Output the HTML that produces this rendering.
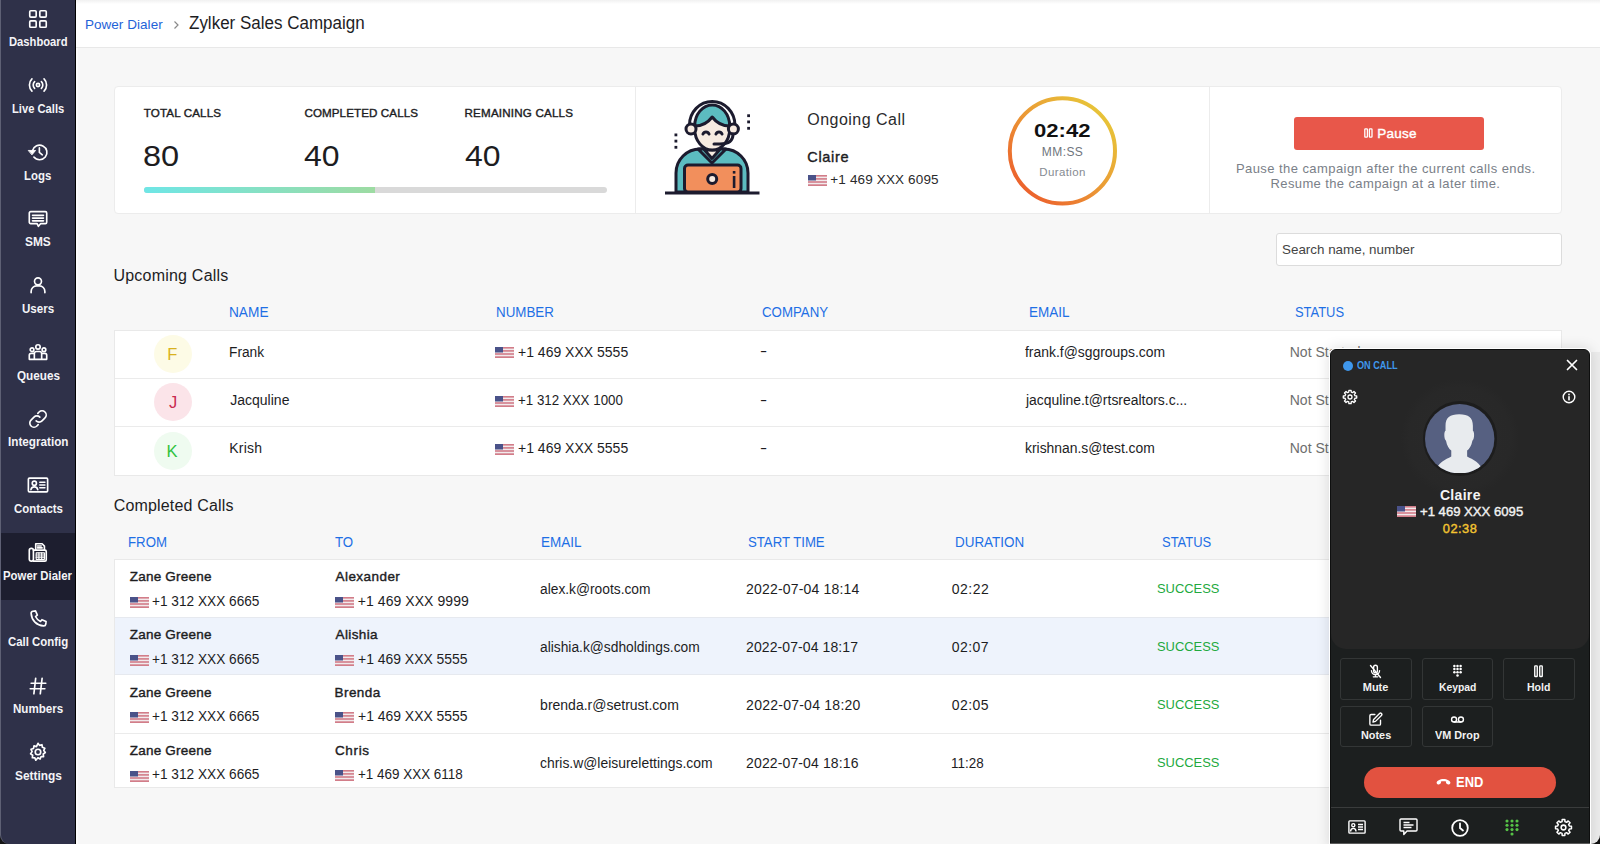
<!DOCTYPE html>
<html><head><meta charset="utf-8">
<style>
*{box-sizing:border-box;margin:0;padding:0}
html,body{width:1600px;height:844px;overflow:hidden;font-family:"Liberation Sans",sans-serif;background:#f7f7f7;color:#1d1d1f;position:relative}
.abs{position:absolute}
.t{position:absolute;white-space:nowrap;line-height:1}
#side{position:absolute;left:0;top:0;width:76px;height:844px;background:#2f3149;border-right:1px solid #000;border-left:1px solid #5e6074;border-bottom-left-radius:9px;overflow:hidden}
.si{position:absolute;left:0;width:75px;height:66.67px}
#side .abs,#side .t,#side .si{margin-left:-1px}
.si.act{background:#1d1e2f}
#hdr{position:absolute;left:76px;top:0;width:1524px;height:48px;background:#fff;border-bottom:1px solid #e8e8e8}
.card{position:absolute;background:#fff;border:1px solid #ececec;border-radius:4px}
.card2{position:absolute;background:#fff;border:1px solid #e9e9e9}
</style></head><body>
<div class="abs" style="left:0;top:830px;width:14px;height:14px;background:#151515"></div>
<div id="side">
<div class="si" style="top:0.00px"></div>
<svg class="abs" style="left:27px;top:7.80px" width="22" height="22" viewBox="0 0 24 24" fill="none" stroke="#fff" stroke-width="1.8" stroke-linecap="round" stroke-linejoin="round"><rect x="3" y="3" width="7" height="7" rx="1.2"/><rect x="14" y="3" width="7" height="7" rx="1.2"/><rect x="3" y="14" width="7" height="7" rx="1.2"/><rect x="14" y="14" width="7" height="7" rx="1.2"/></svg>
<div class="t" style="left:8.75px;top:36.34px;font-size:12px;color:#f4f4f7;font-weight:bold;transform:scaleX(0.9331);transform-origin:0 0;">Dashboard</div>
<div class="si" style="top:66.67px"></div>
<svg class="abs" style="left:27px;top:74.47px" width="22" height="22" viewBox="0 0 24 24" fill="none" stroke="#fff" stroke-width="1.8" stroke-linecap="round" stroke-linejoin="round"><circle cx="12" cy="12" r="1.8"/><path d="M8.3 8.3a5.2 5.2 0 0 0 0 7.4M15.7 8.3a5.2 5.2 0 0 1 0 7.4M5.4 5.4a9.3 9.3 0 0 0 0 13.2M18.6 5.4a9.3 9.3 0 0 1 0 13.2"/></svg>
<div class="t" style="left:11.75px;top:103.01px;font-size:12px;color:#f4f4f7;font-weight:bold;transform:scaleX(0.9318);transform-origin:0 0;">Live Calls</div>
<div class="si" style="top:133.34px"></div>
<svg class="abs" style="left:27px;top:141.14px" width="22" height="22" viewBox="0 0 24 24" fill="none" stroke="#fff" stroke-width="1.8" stroke-linecap="round" stroke-linejoin="round"><path d="M6 10.5A8 8 0 1 1 7.5 17.5"/><path d="M1.8 10.3h7.6L5.6 14.8z" fill="#fff" stroke="#fff" stroke-width="1"/><path d="M13.5 7.5v5l3.2 2.6"/></svg>
<div class="t" style="left:24.24px;top:169.68px;font-size:12px;color:#f4f4f7;font-weight:bold;transform:scaleX(0.9500);transform-origin:0 0;">Logs</div>
<div class="si" style="top:200.01px"></div>
<svg class="abs" style="left:27px;top:207.81px" width="22" height="22" viewBox="0 0 24 24" fill="none" stroke="#fff" stroke-width="1.8" stroke-linecap="round" stroke-linejoin="round"><path d="M4 4h16a1.5 1.5 0 0 1 1.5 1.5v10a1.5 1.5 0 0 1-1.5 1.5h-5l-2.5 3-1.5-3H4A1.5 1.5 0 0 1 2.5 15.5v-10A1.5 1.5 0 0 1 4 4z"/><path d="M6 8h12M6 11h12M6 14h12"/></svg>
<div class="t" style="left:25.16px;top:236.35px;font-size:12px;color:#f4f4f7;font-weight:bold;transform:scaleX(0.9925);transform-origin:0 0;">SMS</div>
<div class="si" style="top:266.68px"></div>
<svg class="abs" style="left:27px;top:274.48px" width="22" height="22" viewBox="0 0 24 24" fill="none" stroke="#fff" stroke-width="1.8" stroke-linecap="round" stroke-linejoin="round"><circle cx="12" cy="8" r="3.8"/><path d="M4.5 20.5v-1.5a6 6 0 0 1 6-6h3a6 6 0 0 1 6 6v1.5"/></svg>
<div class="t" style="left:21.80px;top:303.02px;font-size:12px;color:#f4f4f7;font-weight:bold;transform:scaleX(0.9644);transform-origin:0 0;">Users</div>
<div class="si" style="top:333.35px"></div>
<svg class="abs" style="left:27px;top:341.15px" width="22" height="22" viewBox="0 0 24 24" fill="none" stroke="#fff" stroke-width="1.8" stroke-linecap="round" stroke-linejoin="round"><circle cx="12" cy="6.5" r="2.4"/><circle cx="5.5" cy="9.5" r="2"/><circle cx="18.5" cy="9.5" r="2"/><path d="M8 20v-6a2.5 2.5 0 0 1 2.5-2.5h3A2.5 2.5 0 0 1 16 14v6M2.5 20v-4.5a2 2 0 0 1 2-2H8M21.5 20v-4.5a2 2 0 0 0-2-2H16M2.5 20h19"/></svg>
<div class="t" style="left:16.52px;top:369.69px;font-size:12px;color:#f4f4f7;font-weight:bold;transform:scaleX(0.9760);transform-origin:0 0;">Queues</div>
<div class="si" style="top:400.02px"></div>
<svg class="abs" style="left:27px;top:407.82px" width="22" height="22" viewBox="0 0 24 24" fill="none" stroke="#fff" stroke-width="1.8" stroke-linecap="round" stroke-linejoin="round"><path d="M10 14a4.5 4.5 0 0 0 6.4 0l3.2-3.2a4.5 4.5 0 0 0-6.4-6.4l-1.4 1.4"/><path d="M14 10a4.5 4.5 0 0 0-6.4 0l-3.2 3.2a4.5 4.5 0 0 0 6.4 6.4l1.4-1.4"/></svg>
<div class="t" style="left:7.72px;top:436.36px;font-size:12px;color:#f4f4f7;font-weight:bold;transform:scaleX(0.9760);transform-origin:0 0;">Integration</div>
<div class="si" style="top:466.69px"></div>
<svg class="abs" style="left:27px;top:474.49px" width="22" height="22" viewBox="0 0 24 24" fill="none" stroke="#fff" stroke-width="1.8" stroke-linecap="round" stroke-linejoin="round"><rect x="1.5" y="4.5" width="21" height="15" rx="1.2"/><circle cx="8" cy="10" r="2.3"/><path d="M4.3 17a3.8 3.8 0 0 1 7.4 0M14 9h5.5M14 12h5.5M14 15h5.5"/></svg>
<div class="t" style="left:13.53px;top:503.03px;font-size:12px;color:#f4f4f7;font-weight:bold;transform:scaleX(0.9532);transform-origin:0 0;">Contacts</div>
<div class="si act" style="top:533.36px"></div>
<svg class="abs" style="left:27px;top:541.16px" width="22" height="22" viewBox="0 0 24 24" fill="none" stroke="#fff" stroke-width="1.8" stroke-linecap="round" stroke-linejoin="round"><rect x="2.5" y="8" width="4.5" height="14" rx="2"/><path d="M7 10h12.5a1.5 1.5 0 0 1 1.5 1.5v9a1.5 1.5 0 0 1-1.5 1.5H7"/><path d="M9.5 10V3h7l2.5 2.5V10"/><path d="M11.5 5.5h4M11.5 7.5h5"/><rect x="10" y="13" width="9" height="7" stroke-width="1.2"/><path d="M13 13v7M16 13v7M10 15.3h9M10 17.6h9" stroke-width="1.2"/></svg>
<div class="t" style="left:3.24px;top:569.70px;font-size:12px;color:#f4f4f7;font-weight:bold;transform:scaleX(0.9482);transform-origin:0 0;">Power Dialer</div>
<div class="si" style="top:600.03px"></div>
<svg class="abs" style="left:27px;top:607.83px" width="22" height="22" viewBox="0 0 24 24" fill="none" stroke="#fff" stroke-width="1.8" stroke-linecap="round" stroke-linejoin="round"><path d="M6.5 3.5l2.8-.3 2 4.5-2 1.6a11 11 0 0 0 5.4 5.4l1.6-2 4.5 2-.3 2.8a2.3 2.3 0 0 1-2.4 2C10.5 19 5 13.5 4.5 5.9a2.3 2.3 0 0 1 2-2.4z"/></svg>
<div class="t" style="left:8.03px;top:636.37px;font-size:12px;color:#f4f4f7;font-weight:bold;transform:scaleX(0.9511);transform-origin:0 0;">Call Config</div>
<div class="si" style="top:666.70px"></div>
<svg class="abs" style="left:27px;top:674.50px" width="22" height="22" viewBox="0 0 24 24" fill="none" stroke="#fff" stroke-width="1.8" stroke-linecap="round" stroke-linejoin="round"><path d="M9.5 3.5l-2 17M16.5 3.5l-2 17M4.5 9h16M3.5 15h16"/></svg>
<div class="t" style="left:12.72px;top:703.04px;font-size:12px;color:#f4f4f7;font-weight:bold;transform:scaleX(0.9661);transform-origin:0 0;">Numbers</div>
<div class="si" style="top:733.37px"></div>
<svg class="abs" style="left:27px;top:741.17px" width="22" height="22" viewBox="0 0 24 24" fill="none" stroke="#fff" stroke-width="1.8" stroke-linecap="round" stroke-linejoin="round"><circle cx="12" cy="12" r="3"/><path d="M12 2.5l1.6 2.3 2.7-.8.5 2.8 2.7 1-1.2 2.5 1.7 2.3-2.3 1.6.4 2.8-2.8.1-1 2.6-2.4-1.4L9.6 21l-1-2.6-2.8-.1.4-2.8-2.3-1.6 1.7-2.3-1.2-2.5 2.7-1 .5-2.8 2.7.8z"/></svg>
<div class="t" style="left:14.66px;top:769.71px;font-size:12px;color:#f4f4f7;font-weight:bold;transform:scaleX(0.9892);transform-origin:0 0;">Settings</div>
</div>
<div id="hdr"></div>
<div class="abs" style="left:76px;top:0;width:1524px;height:4px;background:linear-gradient(#f1f1f1,#fff)"></div>
<div class="abs" style="left:76px;top:48px;width:2px;height:796px;background:#fcfcfc"></div>
<div class="t" style="left:84.89px;top:18.07px;font-size:13.5px;color:#1f63d8;letter-spacing:0.051px;">Power Dialer</div>
<svg class="abs" style="left:172px;top:20px" width="8" height="10" viewBox="0 0 8 10"><path d="M2.5 1.5L6 5 2.5 8.5" fill="none" stroke="#8a8a8a" stroke-width="1.2"/></svg>
<div class="t" style="left:189.46px;top:14.99px;font-size:17.5px;color:#1d1d1f;transform:scaleX(0.9709);transform-origin:0 0;">Zylker Sales Campaign</div>
<div class="card" style="left:114px;top:86px;width:1448px;height:128px"></div>
<div class="abs" style="left:635px;top:87px;width:1px;height:126px;background:#ececec"></div>
<div class="abs" style="left:1209px;top:87px;width:1px;height:126px;background:#ececec"></div>
<div class="t" style="left:143.74px;top:106.98px;font-size:11.6px;color:#1d1d1f;-webkit-text-stroke:0.4px #1d1d1f;letter-spacing:0.143px;">TOTAL CALLS</div>
<div class="t" style="left:304.41px;top:106.98px;font-size:11.6px;color:#1d1d1f;-webkit-text-stroke:0.4px #1d1d1f;letter-spacing:0.104px;">COMPLETED CALLS</div>
<div class="t" style="left:464.55px;top:106.98px;font-size:11.6px;color:#1d1d1f;-webkit-text-stroke:0.4px #1d1d1f;letter-spacing:0.198px;">REMAINING CALLS</div>
<div class="t" style="left:143.09px;top:140.60px;font-size:30px;color:#1d1d1f;transform:scaleX(1.0844);transform-origin:0 0;">80</div>
<div class="t" style="left:304.27px;top:140.60px;font-size:30px;color:#1d1d1f;transform:scaleX(1.0632);transform-origin:0 0;">40</div>
<div class="t" style="left:465.27px;top:140.60px;font-size:30px;color:#1d1d1f;transform:scaleX(1.0632);transform-origin:0 0;">40</div>
<div class="abs" style="left:144px;top:187px;width:463px;height:6px;border-radius:3px;background:#d9d9d9;overflow:hidden"><div style="width:231px;height:6px;background:linear-gradient(90deg,#6fe6e6,#9ddba2)"></div></div>
<svg class="abs" style="left:655px;top:95px" width="110" height="105" viewBox="0 0 110 105">
<g stroke="#1c1b2e" stroke-width="3" stroke-linejoin="round" stroke-linecap="round">
<path d="M21 97V78a24 24 0 0 1 24-24h24a24 24 0 0 1 24 24v19z" fill="#5cbcc0"/>
<path d="M43 54l14 14 14-14z" fill="#5cbcc0"/>
<path d="M49.5 55l7.5 8.5 7.5-8.5z" fill="#f7ebe1"/>
<rect x="29.5" y="70" width="56.5" height="27" rx="3.5" fill="#f28f5c"/>
<circle cx="57.2" cy="84" r="4.5" fill="#f7ebe1"/>
<ellipse cx="57.2" cy="34" rx="17.5" ry="21" fill="#f7ebe1"/>
<path d="M39.7 31a17.5 21 0 0 1 35 0c-6 0-13-3-17.5-9-4.5 6-11.5 9-17.5 9z" fill="#5cbcc0"/>
<path d="M34.5 30a22.7 23.5 0 0 1 45.4 0" fill="none"/>
<circle cx="36" cy="34" r="5" fill="#f7ebe1"/>
<circle cx="78.4" cy="34" r="5" fill="#f7ebe1"/>
<path d="M78 39c0 6-4 10-13 10h-6" fill="none"/>
<path d="M48 39a3.2 3 0 0 1 6 0M61 39a3.2 3 0 0 1 6 0" fill="none"/>
</g>
<path d="M10 98H104.5" stroke="#1c1b2e" stroke-width="3"/>
<rect x="77.8" y="76" width="2.6" height="2.6" fill="#1c1b2e"/>
<rect x="77.8" y="81" width="2.6" height="12" fill="#1c1b2e"/>
<rect x="19.5" y="38.5" width="2.8" height="2.8" fill="#1c1b2e"/>
<rect x="19.5" y="44.7" width="2.8" height="2.8" fill="#1c1b2e"/>
<rect x="19.5" y="50.9" width="2.8" height="2.8" fill="#1c1b2e"/>
<rect x="92.2" y="19.3" width="2.8" height="2.8" fill="#1c1b2e"/>
<rect x="92.2" y="25.5" width="2.8" height="2.8" fill="#1c1b2e"/>
<rect x="92.2" y="31.9" width="2.8" height="2.8" fill="#1c1b2e"/>
</svg>
<div class="t" style="left:807.24px;top:111.96px;font-size:16px;color:#2a2a2c;letter-spacing:0.484px;">Ongoing Call</div>
<div class="t" style="left:807.26px;top:150.23px;font-size:14.5px;color:#1d1d1f;-webkit-text-stroke:0.4px #1d1d1f;letter-spacing:0.702px;">Claire</div>
<svg class="abs" style="left:808px;top:175px" width="19" height="11" viewBox="0 0 19 11" preserveAspectRatio="none"><rect width="19" height="11" fill="#f2eaec"/><rect y="0" width="19" height="1.6" fill="#d27d89"/><rect y="3.1" width="19" height="1.6" fill="#d27d89"/><rect y="6.2" width="19" height="1.6" fill="#d27d89"/><rect y="9.3" width="19" height="1.7" fill="#d27d89"/><rect width="8" height="5.5" fill="#4a5289"/></svg>
<div class="t" style="left:830.34px;top:173.07px;font-size:13.5px;color:#2a2a2c;letter-spacing:0.144px;">+1 469 XXX 6095</div>
<svg class="abs" style="left:1005px;top:93px" width="115" height="115" viewBox="0 0 115 115">
<defs><linearGradient id="rg" x1="1" y1="0" x2="0" y2="1"><stop offset="0" stop-color="#e6d23a"/><stop offset="0.5" stop-color="#eb9a35"/><stop offset="1" stop-color="#ec4e2a"/></linearGradient></defs>
<circle cx="57.4" cy="57.9" r="52.6" fill="#fff" stroke="url(#rg)" stroke-width="4"/></svg>
<div class="t" style="left:1034.43px;top:122.29px;font-size:18.8px;color:#111;font-weight:bold;transform:scaleX(1.1763);transform-origin:0 0;">02:42</div>
<div class="t" style="left:1041.82px;top:145.74px;font-size:12px;color:#6f757d;letter-spacing:0.425px;">MM:SS</div>
<div class="t" style="left:1039.36px;top:166.87px;font-size:11.5px;color:#868b92;letter-spacing:0.375px;">Duration</div>
<div class="abs" style="left:1294px;top:117px;width:190px;height:32.5px;border-radius:3px;background:#e8574a"></div>
<svg class="abs" style="left:1364px;top:128px" width="9" height="10" viewBox="0 0 9 10"><rect x="0.8" y="0.8" width="2.6" height="8.4" rx="0.6" fill="none" stroke="#fff" stroke-width="1.3"/><rect x="5.4" y="0.8" width="2.6" height="8.4" rx="0.6" fill="none" stroke="#fff" stroke-width="1.3"/></svg>
<div class="t" style="left:1377.19px;top:126.77px;font-size:13.5px;color:#fff;-webkit-text-stroke:0.4px #fff;letter-spacing:0.282px;">Pause</div>
<div class="t" style="left:1235.93px;top:161.60px;font-size:13px;color:#7a8088;letter-spacing:0.432px;">Pause the campaign after the current calls ends.</div>
<div class="t" style="left:1270.53px;top:176.90px;font-size:13px;color:#7a8088;letter-spacing:0.383px;">Resume the campaign at a later time.</div>
<div class="abs" style="left:1276px;top:233px;width:286px;height:33px;border:1px solid #dcdcdc;border-radius:3px;background:#fff"></div>
<div class="t" style="left:1281.69px;top:242.57px;font-size:13.5px;color:#444;transform:scaleX(0.9922);transform-origin:0 0;">Search name, number</div>
<div class="t" style="left:113.47px;top:267.86px;font-size:16px;color:#1d1d1f;letter-spacing:0.213px;">Upcoming Calls</div>
<div class="t" style="left:229.28px;top:304.90px;font-size:14.3px;color:#1e6fe5;transform:scaleX(0.9563);transform-origin:0 0;">NAME</div>
<div class="t" style="left:495.80px;top:304.90px;font-size:14.3px;color:#1e6fe5;transform:scaleX(0.9346);transform-origin:0 0;">NUMBER</div>
<div class="t" style="left:762.33px;top:304.90px;font-size:14.3px;color:#1e6fe5;transform:scaleX(0.9290);transform-origin:0 0;">COMPANY</div>
<div class="t" style="left:1028.59px;top:304.90px;font-size:14.3px;color:#1e6fe5;transform:scaleX(0.9451);transform-origin:0 0;">EMAIL</div>
<div class="t" style="left:1295.21px;top:304.90px;font-size:14.3px;color:#1e6fe5;transform:scaleX(0.9037);transform-origin:0 0;">STATUS</div>
<div class="card2" style="left:114px;top:329.5px;width:1448px;height:146.5px"></div>
<div class="abs" style="left:115px;top:377.5px;width:1446px;height:1px;background:#ebebeb"></div>
<div class="abs" style="left:115px;top:425.7px;width:1446px;height:1px;background:#ebebeb"></div>
<div class="abs" style="left:153.6px;top:334.8px;width:38px;height:38px;border-radius:50%;background:#fdfbe6"></div>
<div class="t" style="left:167.21px;top:345.93px;font-size:16.5px;color:#d8b120;">F</div>
<div class="t" style="left:229.27px;top:344.65px;font-size:14px;color:#1d1d1f;transform:scaleX(0.9810);transform-origin:0 0;">Frank</div>
<svg class="abs" style="left:495px;top:347.2px" width="19" height="11" viewBox="0 0 19 11" preserveAspectRatio="none"><rect width="19" height="11" fill="#f2eaec"/><rect y="0" width="19" height="1.6" fill="#d27d89"/><rect y="3.1" width="19" height="1.6" fill="#d27d89"/><rect y="6.2" width="19" height="1.6" fill="#d27d89"/><rect y="9.3" width="19" height="1.7" fill="#d27d89"/><rect width="8" height="5.5" fill="#4a5289"/></svg>
<div class="t" style="left:518.02px;top:344.65px;font-size:14px;color:#1d1d1f;">+1 469 XXX 5555</div>
<div class="t" style="left:759.85px;top:344.45px;font-size:14px;color:#1d1d1f;transform:scaleX(1.5214);transform-origin:0 0;">-</div>
<div class="t" style="left:1025.30px;top:344.65px;font-size:14px;color:#1d1d1f;transform:scaleX(0.9934);transform-origin:0 0;">frank.f@sggroups.com</div>
<div class="t" style="left:1289.75px;top:344.65px;font-size:14px;color:#6e6e6e;">Not Started</div>
<div class="abs" style="left:153.6px;top:383.2px;width:38px;height:38px;border-radius:50%;background:#fbe4e9"></div>
<div class="t" style="left:168.96px;top:394.33px;font-size:16.5px;color:#c92a50;">J</div>
<div class="t" style="left:230.18px;top:393.05px;font-size:14px;color:#1d1d1f;letter-spacing:0.011px;">Jacquline</div>
<svg class="abs" style="left:495px;top:395.6px" width="19" height="11" viewBox="0 0 19 11" preserveAspectRatio="none"><rect width="19" height="11" fill="#f2eaec"/><rect y="0" width="19" height="1.6" fill="#d27d89"/><rect y="3.1" width="19" height="1.6" fill="#d27d89"/><rect y="6.2" width="19" height="1.6" fill="#d27d89"/><rect y="9.3" width="19" height="1.7" fill="#d27d89"/><rect width="8" height="5.5" fill="#4a5289"/></svg>
<div class="t" style="left:518.05px;top:393.05px;font-size:14px;color:#1d1d1f;transform:scaleX(0.9521);transform-origin:0 0;">+1 312 XXX 1000</div>
<div class="t" style="left:759.85px;top:392.85px;font-size:14px;color:#1d1d1f;transform:scaleX(1.5214);transform-origin:0 0;">-</div>
<div class="t" style="left:1025.84px;top:393.05px;font-size:14px;color:#1d1d1f;transform:scaleX(0.9950);transform-origin:0 0;">jacquline.t@rtsrealtors.c...</div>
<div class="t" style="left:1289.75px;top:393.05px;font-size:14px;color:#6e6e6e;">Not Started</div>
<div class="abs" style="left:153.6px;top:431.6px;width:38px;height:38px;border-radius:50%;background:#effbf0"></div>
<div class="t" style="left:166.51px;top:442.73px;font-size:16.5px;color:#2fc23f;">K</div>
<div class="t" style="left:229.25px;top:441.45px;font-size:14px;color:#1d1d1f;letter-spacing:0.240px;">Krish</div>
<svg class="abs" style="left:495px;top:444.0px" width="19" height="11" viewBox="0 0 19 11" preserveAspectRatio="none"><rect width="19" height="11" fill="#f2eaec"/><rect y="0" width="19" height="1.6" fill="#d27d89"/><rect y="3.1" width="19" height="1.6" fill="#d27d89"/><rect y="6.2" width="19" height="1.6" fill="#d27d89"/><rect y="9.3" width="19" height="1.7" fill="#d27d89"/><rect width="8" height="5.5" fill="#4a5289"/></svg>
<div class="t" style="left:518.02px;top:441.45px;font-size:14px;color:#1d1d1f;">+1 469 XXX 5555</div>
<div class="t" style="left:759.85px;top:441.25px;font-size:14px;color:#1d1d1f;transform:scaleX(1.5214);transform-origin:0 0;">-</div>
<div class="t" style="left:1024.56px;top:441.45px;font-size:14px;color:#1d1d1f;transform:scaleX(0.9918);transform-origin:0 0;">krishnan.s@test.com</div>
<div class="t" style="left:1289.75px;top:441.45px;font-size:14px;color:#6e6e6e;">Not Started</div>
<div class="t" style="left:113.69px;top:498.46px;font-size:16px;color:#1d1d1f;letter-spacing:0.165px;">Completed Calls</div>
<div class="t" style="left:128.31px;top:534.90px;font-size:14.3px;color:#1e6fe5;transform:scaleX(0.9258);transform-origin:0 0;">FROM</div>
<div class="t" style="left:335.30px;top:534.90px;font-size:14.3px;color:#1e6fe5;transform:scaleX(0.9283);transform-origin:0 0;">TO</div>
<div class="t" style="left:541.49px;top:534.90px;font-size:14.3px;color:#1e6fe5;transform:scaleX(0.9451);transform-origin:0 0;">EMAIL</div>
<div class="t" style="left:748.20px;top:534.90px;font-size:14.3px;color:#1e6fe5;transform:scaleX(0.9219);transform-origin:0 0;">START TIME</div>
<div class="t" style="left:954.90px;top:534.90px;font-size:14.3px;color:#1e6fe5;transform:scaleX(0.9400);transform-origin:0 0;">DURATION</div>
<div class="t" style="left:1162.21px;top:534.90px;font-size:14.3px;color:#1e6fe5;transform:scaleX(0.9074);transform-origin:0 0;">STATUS</div>
<div class="card2" style="left:114px;top:559px;width:1448px;height:228.5px"></div>
<div class="abs" style="left:115px;top:617px;width:1446px;height:58.4px;background:#eef3fc;border-top:1px solid #e6e9ef;border-bottom:1px solid #e6e9ef"></div>
<div class="abs" style="left:115px;top:733px;width:1446px;height:1px;background:#ebebeb"></div>
<div class="t" style="left:129.77px;top:569.87px;font-size:13.5px;color:#1d1d1f;-webkit-text-stroke:0.4px #1d1d1f;letter-spacing:0.208px;">Zane Greene</div>
<svg class="abs" style="left:129.8px;top:596.9px" width="19" height="11" viewBox="0 0 19 11" preserveAspectRatio="none"><rect width="19" height="11" fill="#f2eaec"/><rect y="0" width="19" height="1.6" fill="#d27d89"/><rect y="3.1" width="19" height="1.6" fill="#d27d89"/><rect y="6.2" width="19" height="1.6" fill="#d27d89"/><rect y="9.3" width="19" height="1.7" fill="#d27d89"/><rect width="8" height="5.5" fill="#4a5289"/></svg>
<div class="t" style="left:152.03px;top:593.85px;font-size:14px;color:#1d1d1f;transform:scaleX(0.9754);transform-origin:0 0;">+1 312 XXX 6665</div>
<div class="t" style="left:335.57px;top:569.87px;font-size:13.5px;color:#1d1d1f;-webkit-text-stroke:0.4px #1d1d1f;letter-spacing:0.433px;">Alexander</div>
<svg class="abs" style="left:335px;top:596.7px" width="19" height="11" viewBox="0 0 19 11" preserveAspectRatio="none"><rect width="19" height="11" fill="#f2eaec"/><rect y="0" width="19" height="1.6" fill="#d27d89"/><rect y="3.1" width="19" height="1.6" fill="#d27d89"/><rect y="6.2" width="19" height="1.6" fill="#d27d89"/><rect y="9.3" width="19" height="1.7" fill="#d27d89"/><rect width="8" height="5.5" fill="#4a5289"/></svg>
<div class="t" style="left:357.82px;top:593.85px;font-size:14px;color:#1d1d1f;letter-spacing:0.057px;">+1 469 XXX 9999</div>
<div class="t" style="left:540.41px;top:581.55px;font-size:14px;color:#1d1d1f;transform:scaleX(0.9844);transform-origin:0 0;">alex.k@roots.com</div>
<div class="t" style="left:746.10px;top:581.55px;font-size:14px;color:#1d1d1f;letter-spacing:0.172px;">2022-07-04 18:14</div>
<div class="t" style="left:951.85px;top:581.55px;font-size:14px;color:#1d1d1f;letter-spacing:0.454px;">02:22</div>
<div class="t" style="left:1157.41px;top:581.97px;font-size:13.5px;color:#22a93d;transform:scaleX(0.9558);transform-origin:0 0;">SUCCESS</div>
<div class="t" style="left:129.77px;top:628.37px;font-size:13.5px;color:#1d1d1f;-webkit-text-stroke:0.4px #1d1d1f;letter-spacing:0.208px;">Zane Greene</div>
<svg class="abs" style="left:129.8px;top:655.0px" width="19" height="11" viewBox="0 0 19 11" preserveAspectRatio="none"><rect width="19" height="11" fill="#f2eaec"/><rect y="0" width="19" height="1.6" fill="#d27d89"/><rect y="3.1" width="19" height="1.6" fill="#d27d89"/><rect y="6.2" width="19" height="1.6" fill="#d27d89"/><rect y="9.3" width="19" height="1.7" fill="#d27d89"/><rect width="8" height="5.5" fill="#4a5289"/></svg>
<div class="t" style="left:152.03px;top:651.95px;font-size:14px;color:#1d1d1f;transform:scaleX(0.9754);transform-origin:0 0;">+1 312 XXX 6665</div>
<div class="t" style="left:335.57px;top:628.37px;font-size:13.5px;color:#1d1d1f;-webkit-text-stroke:0.4px #1d1d1f;letter-spacing:0.376px;">Alishia</div>
<svg class="abs" style="left:335px;top:654.8px" width="19" height="11" viewBox="0 0 19 11" preserveAspectRatio="none"><rect width="19" height="11" fill="#f2eaec"/><rect y="0" width="19" height="1.6" fill="#d27d89"/><rect y="3.1" width="19" height="1.6" fill="#d27d89"/><rect y="6.2" width="19" height="1.6" fill="#d27d89"/><rect y="9.3" width="19" height="1.7" fill="#d27d89"/><rect width="8" height="5.5" fill="#4a5289"/></svg>
<div class="t" style="left:357.82px;top:651.95px;font-size:14px;color:#1d1d1f;transform:scaleX(0.9947);transform-origin:0 0;">+1 469 XXX 5555</div>
<div class="t" style="left:540.41px;top:639.75px;font-size:14px;color:#1d1d1f;transform:scaleX(0.9854);transform-origin:0 0;">alishia.k@sdholdings.com</div>
<div class="t" style="left:746.10px;top:639.75px;font-size:14px;color:#1d1d1f;letter-spacing:0.091px;">2022-07-04 18:17</div>
<div class="t" style="left:951.85px;top:639.75px;font-size:14px;color:#1d1d1f;letter-spacing:0.404px;">02:07</div>
<div class="t" style="left:1157.41px;top:640.17px;font-size:13.5px;color:#22a93d;transform:scaleX(0.9558);transform-origin:0 0;">SUCCESS</div>
<div class="t" style="left:129.77px;top:686.17px;font-size:13.5px;color:#1d1d1f;-webkit-text-stroke:0.4px #1d1d1f;letter-spacing:0.208px;">Zane Greene</div>
<svg class="abs" style="left:129.8px;top:712.4px" width="19" height="11" viewBox="0 0 19 11" preserveAspectRatio="none"><rect width="19" height="11" fill="#f2eaec"/><rect y="0" width="19" height="1.6" fill="#d27d89"/><rect y="3.1" width="19" height="1.6" fill="#d27d89"/><rect y="6.2" width="19" height="1.6" fill="#d27d89"/><rect y="9.3" width="19" height="1.7" fill="#d27d89"/><rect width="8" height="5.5" fill="#4a5289"/></svg>
<div class="t" style="left:152.03px;top:709.35px;font-size:14px;color:#1d1d1f;transform:scaleX(0.9754);transform-origin:0 0;">+1 312 XXX 6665</div>
<div class="t" style="left:334.49px;top:686.17px;font-size:13.5px;color:#1d1d1f;-webkit-text-stroke:0.4px #1d1d1f;letter-spacing:0.455px;">Brenda</div>
<svg class="abs" style="left:335px;top:712.2px" width="19" height="11" viewBox="0 0 19 11" preserveAspectRatio="none"><rect width="19" height="11" fill="#f2eaec"/><rect y="0" width="19" height="1.6" fill="#d27d89"/><rect y="3.1" width="19" height="1.6" fill="#d27d89"/><rect y="6.2" width="19" height="1.6" fill="#d27d89"/><rect y="9.3" width="19" height="1.7" fill="#d27d89"/><rect width="8" height="5.5" fill="#4a5289"/></svg>
<div class="t" style="left:357.82px;top:709.35px;font-size:14px;color:#1d1d1f;transform:scaleX(0.9947);transform-origin:0 0;">+1 469 XXX 5555</div>
<div class="t" style="left:540.10px;top:697.55px;font-size:14px;color:#1d1d1f;">brenda.r@setrust.com</div>
<div class="t" style="left:746.10px;top:697.55px;font-size:14px;color:#1d1d1f;letter-spacing:0.248px;">2022-07-04 18:20</div>
<div class="t" style="left:951.85px;top:697.55px;font-size:14px;color:#1d1d1f;letter-spacing:0.425px;">02:05</div>
<div class="t" style="left:1157.41px;top:697.97px;font-size:13.5px;color:#22a93d;transform:scaleX(0.9558);transform-origin:0 0;">SUCCESS</div>
<div class="t" style="left:129.77px;top:743.97px;font-size:13.5px;color:#1d1d1f;-webkit-text-stroke:0.4px #1d1d1f;letter-spacing:0.208px;">Zane Greene</div>
<svg class="abs" style="left:129.8px;top:770.5px" width="19" height="11" viewBox="0 0 19 11" preserveAspectRatio="none"><rect width="19" height="11" fill="#f2eaec"/><rect y="0" width="19" height="1.6" fill="#d27d89"/><rect y="3.1" width="19" height="1.6" fill="#d27d89"/><rect y="6.2" width="19" height="1.6" fill="#d27d89"/><rect y="9.3" width="19" height="1.7" fill="#d27d89"/><rect width="8" height="5.5" fill="#4a5289"/></svg>
<div class="t" style="left:152.03px;top:767.45px;font-size:14px;color:#1d1d1f;transform:scaleX(0.9754);transform-origin:0 0;">+1 312 XXX 6665</div>
<div class="t" style="left:334.91px;top:743.97px;font-size:13.5px;color:#1d1d1f;-webkit-text-stroke:0.4px #1d1d1f;letter-spacing:0.668px;">Chris</div>
<svg class="abs" style="left:335px;top:770.3px" width="19" height="11" viewBox="0 0 19 11" preserveAspectRatio="none"><rect width="19" height="11" fill="#f2eaec"/><rect y="0" width="19" height="1.6" fill="#d27d89"/><rect y="3.1" width="19" height="1.6" fill="#d27d89"/><rect y="6.2" width="19" height="1.6" fill="#d27d89"/><rect y="9.3" width="19" height="1.7" fill="#d27d89"/><rect width="8" height="5.5" fill="#4a5289"/></svg>
<div class="t" style="left:357.84px;top:767.45px;font-size:14px;color:#1d1d1f;transform:scaleX(0.9600);transform-origin:0 0;">+1 469 XXX 6118</div>
<div class="t" style="left:540.41px;top:755.75px;font-size:14px;color:#1d1d1f;transform:scaleX(0.9931);transform-origin:0 0;">chris.w@leisurelettings.com</div>
<div class="t" style="left:746.10px;top:755.75px;font-size:14px;color:#1d1d1f;letter-spacing:0.119px;">2022-07-04 18:16</div>
<div class="t" style="left:951.38px;top:755.75px;font-size:14px;color:#1d1d1f;transform:scaleX(0.9593);transform-origin:0 0;">11:28</div>
<div class="t" style="left:1157.41px;top:756.17px;font-size:13.5px;color:#22a93d;transform:scaleX(0.9558);transform-origin:0 0;">SUCCESS</div>
<div class="abs" style="left:1588px;top:830px;width:12px;height:14px;background:#111"></div>
<div class="abs" style="left:1590px;top:352px;width:10px;height:492px;background:#ececec;border-left:1px solid #fff;border-bottom-right-radius:9px"></div>
<div class="abs" style="left:1329px;top:348px;width:262px;height:500px;border-radius:7px 7px 0 0;background:#fff;box-shadow:0 0 14px rgba(0,0,0,0.13)"></div>
<div class="abs" style="left:1330px;top:349px;width:260px;height:500px;border-radius:6px 6px 0 0;background:#1c1f1f;border:1px solid #0e0f0f"></div>
<div class="abs" style="left:1331px;top:350px;width:258px;height:298.5px;border-radius:5px 5px 15px 15px;background:#262626"></div>
<div class="abs" style="left:1342.5px;top:360.7px;width:10px;height:10px;border-radius:50%;background:#3f97ec"></div>
<div class="t" style="left:1356.62px;top:360.94px;font-size:10px;color:#3f97ec;font-weight:bold;transform:scaleX(0.9149);transform-origin:0 0;">ON CALL</div>
<svg class="abs" style="left:1566px;top:359px" width="12" height="12" viewBox="0 0 12 12"><path d="M1.5 1.5l9 9M10.5 1.5l-9 9" stroke="#fff" stroke-width="1.7" stroke-linecap="round"/></svg>
<svg class="abs" style="left:1342px;top:389px" width="16" height="16" viewBox="0 0 24 24" fill="none" stroke="#fff" stroke-width="2" stroke-linejoin="round"><path d="M19.38 10.17 L22.06 10.33 L22.06 13.67 L19.38 13.83 L18.51 15.92 L20.30 17.93 L17.93 20.30 L15.92 18.51 L13.83 19.38 L13.67 22.06 L10.33 22.06 L10.17 19.38 L8.08 18.51 L6.07 20.30 L3.70 17.93 L5.49 15.92 L4.62 13.83 L1.94 13.67 L1.94 10.33 L4.62 10.17 L5.49 8.08 L3.70 6.07 L6.07 3.70 L8.08 5.49 L10.17 4.62 L10.33 1.94 L13.67 1.94 L13.83 4.62 L15.92 5.49 L17.93 3.70 L20.30 6.07 L18.51 8.08Z"/><circle cx="12" cy="12" r="3"/></svg>
<svg class="abs" style="left:1562px;top:390px" width="14" height="14" viewBox="0 0 14 14"><circle cx="7" cy="7" r="5.8" fill="none" stroke="#fff" stroke-width="1.4"/><circle cx="7" cy="4.5" r="0.9" fill="#fff"/><rect x="6.2" y="6.2" width="1.6" height="4.2" fill="#fff"/></svg>
<div class="abs" style="left:1400px;top:378px;width:120px;height:120px;border-radius:50%;background:radial-gradient(circle,#2a2a2a 0,#282828 60%,#262626 70%)"></div>
<div class="abs" style="left:1422.7px;top:400.9px;width:74.8px;height:74.8px;border-radius:50%;background:#1d1d1d"></div>
<svg class="abs" style="left:1425.3px;top:403.6px" width="69.4" height="69.4" viewBox="0 0 70 70">
<defs><clipPath id="ac"><circle cx="35" cy="35" r="35"/></clipPath></defs>
<circle cx="35" cy="35" r="35" fill="#566081"/>
<g clip-path="url(#ac)" fill="#e8ebee">
<path d="M34.5 10.3C44 10.3 48.3 13.5 48.3 22L48.3 27C50 27.5 50 36 47.8 37C47 42 44.5 45.5 42.5 47L42.5 53C48 56 56.5 59 58.5 68.5L59 75L10 75L10.5 68.5C12.5 59 21 56 26.5 53L26.5 47C24.5 45.5 22 42 21.2 37C19 36 19 27.5 20.7 27L20.7 22C20.7 13.5 25 10.3 34.5 10.3Z"/>
</g></svg>
<div class="t" style="left:1439.88px;top:488.05px;font-size:14px;color:#f4f4f4;font-weight:bold;letter-spacing:0.329px;">Claire</div>
<svg class="abs" style="left:1397px;top:505.5px" width="19" height="11" viewBox="0 0 19 11" preserveAspectRatio="none"><rect width="19" height="11" fill="#f2eaec"/><rect y="0" width="19" height="1.6" fill="#d27d89"/><rect y="3.1" width="19" height="1.6" fill="#d27d89"/><rect y="6.2" width="19" height="1.6" fill="#d27d89"/><rect y="9.3" width="19" height="1.7" fill="#d27d89"/><rect width="8" height="5.5" fill="#4a5289"/></svg>
<div class="t" style="left:1419.66px;top:505.37px;font-size:13.5px;color:#f2f2f2;-webkit-text-stroke:0.4px #f2f2f2;transform:scaleX(0.9715);transform-origin:0 0;">+1 469 XXX 6095</div>
<div class="t" style="left:1442.80px;top:522.76px;font-size:12.8px;color:#f4c531;-webkit-text-stroke:0.4px #f4c531;letter-spacing:0.506px;">02:38</div>
<div class="abs" style="left:1340px;top:658.2px;width:71.5px;height:41.4px;border:1px solid #333636;border-radius:3px"></div>
<svg class="abs" style="left:1368.2px;top:664.2px" width="15" height="15" viewBox="0 0 24 24" fill="none" stroke="#fff" stroke-width="2.2" stroke-linecap="round" stroke-linejoin="round"><path d="M9 5a3 3 0 0 1 6 0v6a3 3 0 0 1-6 0z"/><path d="M5.5 10.5a6.5 6.5 0 0 0 13 0M12 17v3.5M8.5 20.5h7M4 2.5l16 19"/></svg>
<div class="t" style="left:1362.71px;top:682.19px;font-size:11px;color:#f2f2f2;font-weight:bold;letter-spacing:0.016px;">Mute</div>
<div class="abs" style="left:1421.5px;top:658.2px;width:71.5px;height:41.4px;border:1px solid #333636;border-radius:3px"></div>
<svg class="abs" style="left:1449.8px;top:664.2px" width="15" height="15" viewBox="0 0 24 24" fill="none" stroke="#fff" stroke-width="2.2" stroke-linecap="round" stroke-linejoin="round"><g fill="#fff" stroke="none"><circle cx="7" cy="3" r="2"/><circle cx="12" cy="3" r="2"/><circle cx="17" cy="3" r="2"/><circle cx="7" cy="8" r="2"/><circle cx="12" cy="8" r="2"/><circle cx="17" cy="8" r="2"/><circle cx="7" cy="13" r="2"/><circle cx="12" cy="13" r="2"/><circle cx="17" cy="13" r="2"/><circle cx="12" cy="18.5" r="2"/></g></svg>
<div class="t" style="left:1438.56px;top:682.19px;font-size:11px;color:#f2f2f2;font-weight:bold;transform:scaleX(0.9406);transform-origin:0 0;">Keypad</div>
<div class="abs" style="left:1503px;top:658.2px;width:71.5px;height:41.4px;border:1px solid #333636;border-radius:3px"></div>
<svg class="abs" style="left:1531.2px;top:664.2px" width="15" height="15" viewBox="0 0 24 24" fill="none" stroke="#fff" stroke-width="2.2" stroke-linecap="round" stroke-linejoin="round"><rect x="6" y="3" width="4" height="17" rx="1"/><rect x="14" y="3" width="4" height="17" rx="1"/></svg>
<div class="t" style="left:1527.05px;top:682.19px;font-size:11px;color:#f2f2f2;font-weight:bold;transform:scaleX(0.9575);transform-origin:0 0;">Hold</div>
<div class="abs" style="left:1340px;top:705.9px;width:71.5px;height:41.4px;border:1px solid #333636;border-radius:3px"></div>
<svg class="abs" style="left:1368.2px;top:711.9px" width="15" height="15" viewBox="0 0 24 24" fill="none" stroke="#fff" stroke-width="2.2" stroke-linecap="round" stroke-linejoin="round"><path d="M11 4H5a2 2 0 0 0-2 2v13a2 2 0 0 0 2 2h13a2 2 0 0 0 2-2v-6"/><path d="M18.5 2.5a2.1 2.1 0 0 1 3 3L12 15l-4 1 1-4z"/></svg>
<div class="t" style="left:1360.52px;top:729.89px;font-size:11px;color:#f2f2f2;font-weight:bold;transform:scaleX(0.9873);transform-origin:0 0;">Notes</div>
<div class="abs" style="left:1421.5px;top:705.9px;width:71.5px;height:41.4px;border:1px solid #333636;border-radius:3px"></div>
<svg class="abs" style="left:1449.8px;top:711.9px" width="15" height="15" viewBox="0 0 24 24" fill="none" stroke="#fff" stroke-width="2.2" stroke-linecap="round" stroke-linejoin="round"><circle cx="6.5" cy="12" r="4"/><circle cx="17.5" cy="12" r="4"/><path d="M6.5 16h11"/></svg>
<div class="t" style="left:1435.18px;top:729.89px;font-size:11px;color:#f2f2f2;font-weight:bold;transform:scaleX(0.9845);transform-origin:0 0;">VM Drop</div>
<div class="abs" style="left:1363.7px;top:766.5px;width:192.4px;height:31.6px;border-radius:16px;background:#e25240"></div>
<svg class="abs" style="left:1435.8px;top:777.6px" width="15" height="7.5" viewBox="0 0 15 7.5"><path d="M0.6 4.6C0.8 3 4 1 7.5 1S14.2 3 14.4 4.6L14.2 5.6C13.7 6.6 12.5 6.9 11.6 6.3L10.4 5.4C9.9 4.9 9.9 4.1 10.2 3.6C8.5 3.1 6.5 3.1 4.8 3.6C5.1 4.1 5.1 4.9 4.6 5.4L3.4 6.3C2.5 6.9 1.3 6.6 0.8 5.6Z" fill="#fff"/></svg>
<div class="t" style="left:1456.13px;top:775.10px;font-size:14.3px;color:#fff;font-weight:bold;transform:scaleX(0.9045);transform-origin:0 0;">END</div>
<div class="abs" style="left:1331px;top:807px;width:258px;height:1px;background:#3a3c3c"></div>
<div class="abs" style="left:1330px;top:843px;width:260px;height:1px;background:#5a5a5a"></div>
<svg class="abs" style="left:1347.5px;top:820px" width="18" height="14" viewBox="0 0 18 14" fill="none" stroke="#fff" stroke-width="1.4"><rect x="0.9" y="0.9" width="16.2" height="12.2" rx="0.8"/><circle cx="5.3" cy="5.2" r="1.55"/><path d="M2.6 11.6c0-2 1.2-3.2 2.7-3.2s2.7 1.2 2.7 3.2M10 4.5h5M10 7h5M10 9.5h5"/></svg>
<svg class="abs" style="left:1399px;top:818px" width="19" height="18" viewBox="0 0 19 18" fill="none" stroke="#fff" stroke-width="1.4" stroke-linejoin="round"><path d="M2 1h15a1 1 0 0 1 1 1v10a1 1 0 0 1-1 1H8l-3.2 3.5V13H2a1 1 0 0 1-1-1V2a1 1 0 0 1 1-1z"/><path d="M4.5 4.5h6M4.5 7h10M4.5 9.5h8"/></svg>
<svg class="abs" style="left:1451px;top:818.5px" width="18" height="18" viewBox="0 0 18 18" fill="none" stroke="#fff" stroke-width="1.8" stroke-linecap="round"><circle cx="9" cy="9" r="7.8"/><path d="M9 4.5V9l3 2.5"/></svg>
<svg class="abs" style="left:1505px;top:818.5px" width="14" height="17" viewBox="0 0 14 17" fill="#56c247"><circle cx="2" cy="2" r="1.55"/><circle cx="7" cy="2" r="1.55"/><circle cx="12" cy="2" r="1.55"/><circle cx="2" cy="6.3" r="1.55"/><circle cx="7" cy="6.3" r="1.55"/><circle cx="12" cy="6.3" r="1.55"/><circle cx="2" cy="10.6" r="1.55"/><circle cx="7" cy="10.6" r="1.55"/><circle cx="12" cy="10.6" r="1.55"/><circle cx="7" cy="15" r="1.55"/></svg>
<svg class="abs" style="left:1553.5px;top:817.5px" width="19" height="19" viewBox="0 0 24 24" fill="none" stroke="#fff" stroke-width="1.9" stroke-linejoin="round"><path d="M19.38 10.17 L22.06 10.33 L22.06 13.67 L19.38 13.83 L18.51 15.92 L20.30 17.93 L17.93 20.30 L15.92 18.51 L13.83 19.38 L13.67 22.06 L10.33 22.06 L10.17 19.38 L8.08 18.51 L6.07 20.30 L3.70 17.93 L5.49 15.92 L4.62 13.83 L1.94 13.67 L1.94 10.33 L4.62 10.17 L5.49 8.08 L3.70 6.07 L6.07 3.70 L8.08 5.49 L10.17 4.62 L10.33 1.94 L13.67 1.94 L13.83 4.62 L15.92 5.49 L17.93 3.70 L20.30 6.07 L18.51 8.08Z"/><circle cx="12" cy="12" r="3"/></svg>
</body></html>
